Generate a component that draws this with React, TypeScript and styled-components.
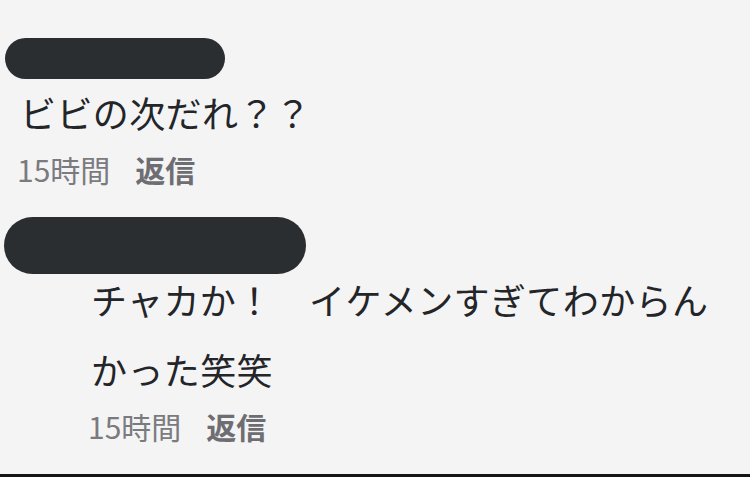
import React from "react";
import styled, { createGlobalStyle } from "styled-components";

const Global = createGlobalStyle`
  html, body { margin: 0; padding: 0; background: #f4f4f5; }
  body { font-family: "Noto Sans CJK JP", "Noto Sans", sans-serif; }
`;

const Page = styled.div`
  box-sizing: border-box;
  width: 750px;
  height: 477px;
  padding-top: 40px;
  background: #f4f4f5;
  border-bottom: 3px solid #151515;
  overflow: hidden;
  display: flex;
  flex-direction: column;
  gap: 36px;
`;

const Comment = styled.div<{ $indent: number }>`
  display: flex;
  flex-direction: column;
  padding-left: ${(p) => p.$indent}px;
`;

const Header = styled.div`
  height: 37px;
  display: flex;
  align-items: center;
  margin-left: -16px;
`;

const Redact = styled.div<{ $w: number; $h: number; $x: number }>`
  flex: none;
  width: ${(p) => p.$w}px;
  height: ${(p) => p.$h}px;
  border-radius: ${(p) => p.$h / 2}px;
  background: #2a2e31;
  margin-left: ${(p) => p.$x}px;
`;

const Body = styled.div`
  font-size: 36px;
  line-height: 70px;
  color: #232528;
  width: 640px;
  letter-spacing: 0.4px;
`;

const Meta = styled.div`
  display: flex;
  align-items: center;
  gap: 25px;
  height: 44px;
  margin-left: -3px;
  font-size: 30px;
  line-height: 44px;
  color: #7b7b7f;
`;

const Reply = styled.span`
  font-weight: 700;
  color: #6e6e72;
`;

export default function App() {
  return (
    <>
      <Global />
      <Page>
        <Comment $indent={20}>
          <Header>
            <Redact $w={220} $h={41} $x={1} />
          </Header>
          <Body>ビビの次だれ？？</Body>
          <Meta>
            <span>15時間</span>
            <Reply>返信</Reply>
          </Meta>
        </Comment>
        <Comment $indent={91}>
          <Header>
            <Redact $w={302} $h={57} $x={-71} />
          </Header>
          <Body>チャカか！　イケメンすぎてわからんかった笑笑</Body>
          <Meta>
            <span>15時間</span>
            <Reply>返信</Reply>
          </Meta>
        </Comment>
      </Page>
    </>
  );
}
